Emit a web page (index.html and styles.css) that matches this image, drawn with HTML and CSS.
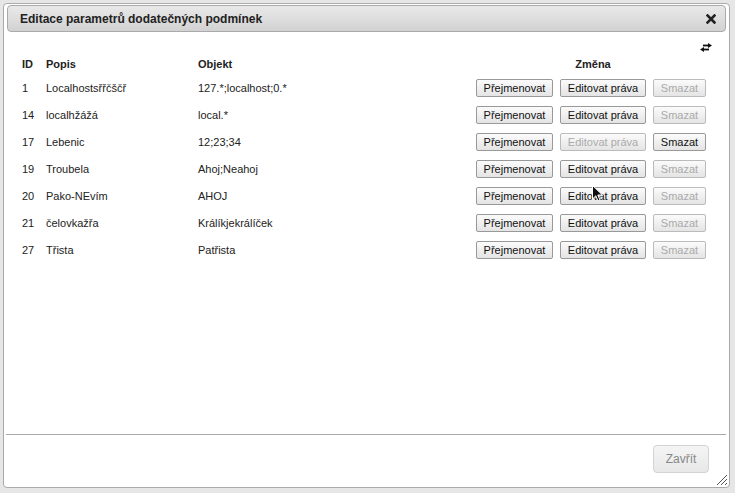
FILE: index.html
```html
<!DOCTYPE html>
<html lang="cs">
<head>
<meta charset="utf-8">
<title>Editace parametrů dodatečných podmínek</title>
<link rel="stylesheet" href="styles.css">
</head>
<body>
<div class="desk">
  <div class="dialog">
    <div class="titlebar">
      <span class="title">Editace parametrů dodatečných podmínek</span>
      <svg class="close" width="10" height="10" viewBox="0 0 10 10"><path d="M1.5 1.5 L8.5 8.5 M8.5 1.5 L1.5 8.5" stroke="#222" stroke-width="2.6" stroke-linecap="square"/></svg>
    </div>
    <div class="content">
      <div class="tools">
        <svg class="swap" width="12" height="9" viewBox="0 0 12 9"><path d="M3 2.5 H9" stroke="#111" stroke-width="1.8"/><path d="M8 0 L12 2.5 L8 5 Z" fill="#111"/><path d="M3 6.5 H9" stroke="#111" stroke-width="1.8"/><path d="M4 4 L0 6.5 L4 9 Z" fill="#111"/></svg>
      </div>
      <div class="row head">
        <div class="c-id">ID</div>
        <div class="c-popis">Popis</div>
        <div class="c-obj">Objekt</div>
        <div class="c-act">Změna</div>
      </div>
      <div class="row">
        <div class="c-id">1</div><div class="c-popis">Localhostsřřčščř</div><div class="c-obj">127.*;localhost;0.*</div>
        <div class="c-act"><button class="btn b1">Přejmenovat</button><button class="btn b2">Editovat práva</button><button class="btn b3" disabled>Smazat</button></div>
      </div>
      <div class="row">
        <div class="c-id">14</div><div class="c-popis">localhžážá</div><div class="c-obj">local.*</div>
        <div class="c-act"><button class="btn b1">Přejmenovat</button><button class="btn b2">Editovat práva</button><button class="btn b3" disabled>Smazat</button></div>
      </div>
      <div class="row">
        <div class="c-id">17</div><div class="c-popis">Lebenic</div><div class="c-obj">12;23;34</div>
        <div class="c-act"><button class="btn b1">Přejmenovat</button><button class="btn b2" disabled>Editovat práva</button><button class="btn b3">Smazat</button></div>
      </div>
      <div class="row">
        <div class="c-id">19</div><div class="c-popis">Troubela</div><div class="c-obj">Ahoj;Neahoj</div>
        <div class="c-act"><button class="btn b1">Přejmenovat</button><button class="btn b2">Editovat práva</button><button class="btn b3" disabled>Smazat</button></div>
      </div>
      <div class="row">
        <div class="c-id">20</div><div class="c-popis">Pako-NEvím</div><div class="c-obj">AHOJ</div>
        <div class="c-act"><button class="btn b1">Přejmenovat</button><button class="btn b2">Editovat práva</button><button class="btn b3" disabled>Smazat</button></div>
      </div>
      <div class="row">
        <div class="c-id">21</div><div class="c-popis">čelovkažřa</div><div class="c-obj">Králíkjekrálíček</div>
        <div class="c-act"><button class="btn b1">Přejmenovat</button><button class="btn b2">Editovat práva</button><button class="btn b3" disabled>Smazat</button></div>
      </div>
      <div class="row">
        <div class="c-id">27</div><div class="c-popis">Třista</div><div class="c-obj">Patřista</div>
        <div class="c-act"><button class="btn b1">Přejmenovat</button><button class="btn b2">Editovat práva</button><button class="btn b3" disabled>Smazat</button></div>
      </div>
    </div>
    <div class="footer">
      <button class="close-btn">Zavřít</button>
    </div>
    <svg class="grip" width="12" height="12" viewBox="0 0 12 12"><path d="M11 1 L1 11 M11 5 L5 11 M11 9 L9 11" stroke="#555" stroke-width="1"/></svg>
  </div>
  <svg class="cursor" width="12" height="18" viewBox="0 0 12 18"><path d="M0.5 0.5 L0.5 14 L3.8 10.8 L6 16 L8 15 L5.8 10 L10.5 10 Z" fill="#111" stroke="#fff" stroke-width="1"/></svg>
</div>
</body>
</html>
```
FILE: styles.css
```css
html, body {
  margin: 0;
  padding: 0;
}
body {
  background: #e6e6e6;
  font-family: "Liberation Sans", Arial, sans-serif;
  font-size: 11px;
  color: #222;
}
.desk {
  position: relative;
  width: 735px;
  height: 493px;
  padding: 3px;
  box-sizing: border-box;
}
.dialog {
  position: relative;
  width: 727px;
  height: 485px;
  box-sizing: border-box;
  border: 1px solid #aaa;
  border-radius: 4px;
  background: #fff;
  padding: 1px 3px 3px;
  display: flex;
  flex-direction: column;
}
.titlebar {
  height: 27px;
  box-sizing: border-box;
  border: 1px solid #aaa;
  border-radius: 4px;
  background: linear-gradient(#e9e9e9, #d2d2d2);
  display: flex;
  align-items: center;
  justify-content: space-between;
  padding: 0 9px 0 12px;
}
.title {
  font-weight: bold;
  font-size: 12px;
  color: #222;
}
.close {
  display: block;
}
.content {
  flex: 1;
  padding: 11px 14px 0 15px;
}
.tools {
  height: 10px;
  display: flex;
  justify-content: flex-end;
}
.swap {
  display: block;
}
.row {
  display: flex;
  align-items: center;
  height: 27px;
}
.row.head {
  height: 21px;
  font-weight: bold;
}
.c-id { width: 24px; }
.c-popis { width: 152px; }
.c-obj { width: 278px; }
.c-act {
  width: 230px;
  display: flex;
  gap: 7px;
}
.head .c-act {
  justify-content: center;
  padding-left: 2px;
}
.btn {
  height: 18px;
  box-sizing: border-box;
  border: 1px solid #999;
  border-radius: 2px;
  background: linear-gradient(#fbfbfb, #e4e4e4);
  font-family: "Liberation Sans", Arial, sans-serif;
  font-size: 11px;
  color: #111;
  padding: 0;
  margin: 0;
}
.btn:disabled {
  color: #aaa;
  border-color: #bbb;
}
.b1 { width: 77px; }
.b2 { width: 86px; }
.b3 { width: 53px; }
.footer {
  border-top: 1px solid #aaa;
  margin: 0 0 0 -1px;
  padding: 10px 17px 11px 0;
  display: flex;
  justify-content: flex-end;
}
.close-btn {
  width: 56px;
  height: 28px;
  box-sizing: border-box;
  border: 1px solid #d3d3d3;
  border-radius: 4px;
  background: linear-gradient(#f5f5f5, #e8e8e8);
  font-family: "Liberation Sans", Arial, sans-serif;
  font-size: 12px;
  color: #888;
  padding: 0;
}
.grip {
  position: absolute;
  right: 1px;
  bottom: 1px;
}
.cursor {
  position: absolute;
  left: 592px;
  top: 185px;
}
```
